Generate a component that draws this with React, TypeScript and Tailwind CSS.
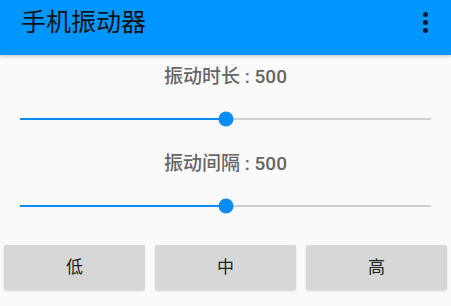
import { useState } from "react";

const font = { fontFamily: '"Roboto", "Noto Sans CJK SC", sans-serif' };

function Slider({ value, max }: { value: number; max: number }) {
  const pct = (value / max) * 100;
  return (
    <div className="relative mx-5 h-4">
      <div className="absolute inset-x-0 top-1/2 h-[2px] -translate-y-1/2 bg-[#d0d0d0]" />
      <div
        className="absolute left-0 top-1/2 h-[2px] -translate-y-1/2 bg-[#0a8cf0]"
        style={{ width: `${pct}%` }}
      />
      <div
        className="absolute top-1/2 h-[15px] w-[15px] -translate-x-1/2 -translate-y-1/2 rounded-full bg-[#0a8cf5]"
        style={{ left: `${pct}%` }}
      />
    </div>
  );
}

export default function App() {
  const [dauer] = useState(500);
  const [abstand] = useState(500);

  return (
    <div className="h-[306px] w-[451px] overflow-hidden bg-[#fafafa]" style={font}>
      <header className="relative z-10 flex h-[55px] items-start justify-between bg-[#0096ff] pl-[21px] pr-[23px] pt-[7px] shadow-[0_1px_4px_rgba(0,0,0,0.25)]">
        <h1 className="text-[25px] leading-[32px] text-[#111]">手机振动器</h1>
        <div className="mt-[5px] flex flex-col gap-[3px]">
          <span className="h-[5px] w-[5px] rounded-full bg-[#0b1a33]" />
          <span className="h-[5px] w-[5px] rounded-full bg-[#0b1a33]" />
          <span className="h-[5px] w-[5px] rounded-full bg-[#0b1a33]" />
        </div>
      </header>

      <main className="pt-[10px]">
        <p className="text-center text-[19px] font-medium leading-[24px] text-[#666]">
          振动时长 : {dauer}
        </p>
        <div className="mt-[22px]">
          <Slider value={dauer} max={1000} />
        </div>

        <p className="mt-[25px] text-center text-[19px] font-medium leading-[24px] text-[#666]">
          振动间隔 : {abstand}
        </p>
        <div className="mt-[22px]">
          <Slider value={abstand} max={1000} />
        </div>

        <div className="mt-[31px] grid grid-cols-3 gap-[10px] px-[4px]">
          {["低", "中", "高"].map((t) => (
            <button
              key={t}
              className="h-[45px] rounded-[2px] bg-[#d6d7d7] text-[17px] text-[#222] shadow-[0_1px_2px_rgba(0,0,0,0.15)]"
            >
              {t}
            </button>
          ))}
        </div>
      </main>
    </div>
  );
}
